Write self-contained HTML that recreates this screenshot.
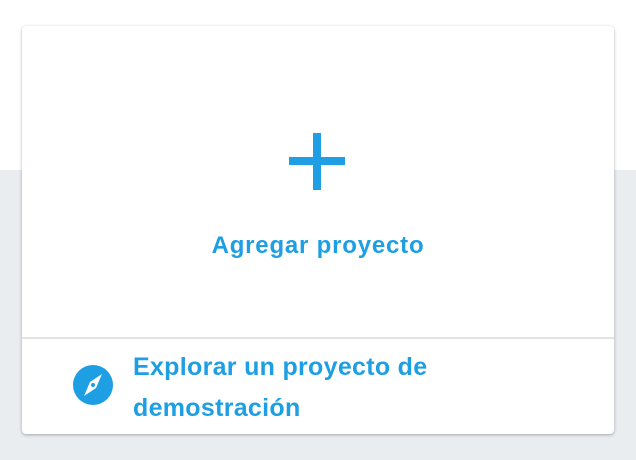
<!DOCTYPE html>
<html><head><meta charset="utf-8"><style>
html,body{margin:0;padding:0;width:636px;height:460px;overflow:hidden;font-family:"Liberation Sans",sans-serif;}
body{background:linear-gradient(#fff 0,#fff 170px,#e9edf0 170px);position:relative;}
.card{position:absolute;left:22px;top:26px;width:592px;height:408px;background:#fff;border-radius:4px;box-shadow:0 1px 3px rgba(0,0,0,.3);}
.h{position:absolute;background:#1e9fe3;}
.t1{position:absolute;left:0;width:592px;text-align:center;top:205px;font-size:24px;font-weight:bold;letter-spacing:0.8px;color:#1e9fe3;line-height:30px;}
.div{position:absolute;left:0;right:0;top:311px;height:2px;background:#e3e3e3;}
.t2{position:absolute;left:111px;top:321px;font-size:25px;font-weight:bold;letter-spacing:0.3px;line-height:41px;color:#1e9fe3;}
</style></head><body>
<div class="card">
<div class="h" style="left:291px;top:107px;width:8px;height:57px"></div>
<div class="h" style="left:267px;top:131px;width:56px;height:8px"></div>
<div class="t1">Agregar proyecto</div>
<div class="div"></div>
<svg style="position:absolute;left:51px;top:339px" width="40" height="40" viewBox="0 0 40 40">
<circle cx="20" cy="20" r="20" fill="#1e9fe3"/>
<path d="M29 9 L23 23 L11 31 L17 17 Z" fill="#fff"/>
<circle cx="20" cy="20" r="2" fill="#1e9fe3"/>
</svg>
<div class="t2">Explorar un proyecto de<br>demostración</div>
</div>
</body></html>
